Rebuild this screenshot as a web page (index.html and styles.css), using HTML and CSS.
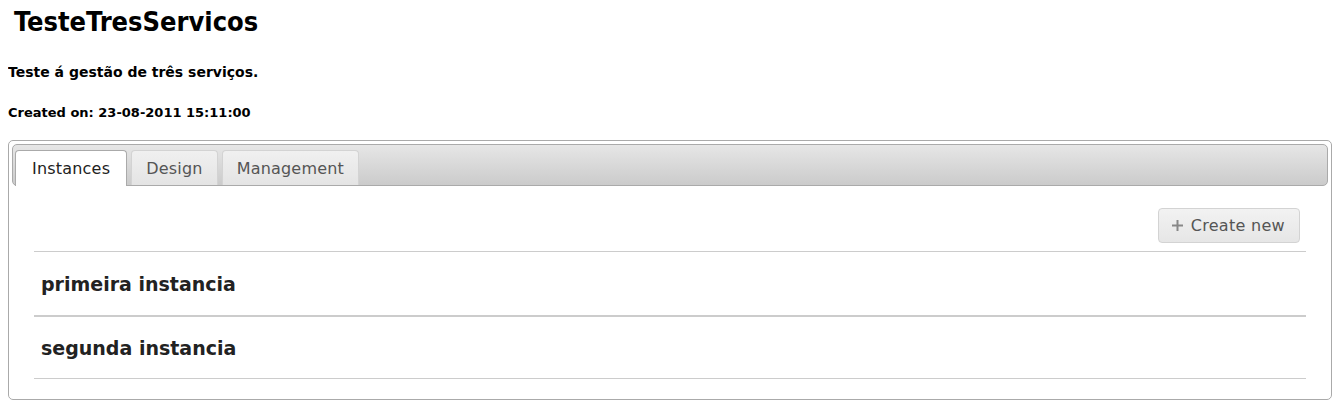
FILE: index.html
```html
<!DOCTYPE html>
<html>
<head>
<meta charset="utf-8">
<link rel="stylesheet" href="styles.css">
</head>
<body>
<h1 class="title">TesteTresServicos</h1>
<p class="desc">Teste á gestão de três serviços.</p>
<p class="created">Created on: 23-08-2011 15:11:00</p>
<div class="tabs">
  <ul class="tab-nav">
    <li class="tab active">Instances</li>
    <li class="tab">Design</li>
    <li class="tab">Management</li>
  </ul>
  <div class="panel">
    <div class="toolbar">
      <button class="btn"><svg class="plus" width="11" height="11" viewBox="0 0 11 11"><path d="M4.5 0h2v4.5H11v2H6.5V11h-2V6.5H0v-2h4.5z" fill="#888"/></svg>Create new</button>
    </div>
    <ul class="list">
      <li class="item first">primeira instancia</li>
      <li class="item second">segunda instancia</li>
    </ul>
  </div>
</div>
</body>
</html>
```
FILE: styles.css
```css
body {
  margin: 8px;
  background: #fff;
  color: #000;
  font-family: "DejaVu Sans", Verdana, sans-serif;
}
.title {
  margin: 0;
  padding-left: 6px;
  font-family: "DejaVu Sans Condensed", "DejaVu Sans", sans-serif;
  font-weight: bold;
  font-size: 27px;
  line-height: 27px;
}
.desc {
  margin: 29px 0 0;
  font-family: "DejaVu Sans", sans-serif;
  font-weight: bold;
  font-size: 14px;
  line-height: 16px;
}
.created {
  margin: 25px 0 0;
  font-family: "DejaVu Sans", sans-serif;
  font-weight: bold;
  font-size: 13px;
  line-height: 15px;
}
.tabs {
  margin-top: 20px;
  border: 1px solid #aaa;
  border-radius: 5px;
  padding: 3px;
  height: 252px;
}
.tab-nav {
  list-style: none;
  margin: 0;
  padding: 5px 2px 0;
  height: 35px;
  display: flex;
  gap: 4px;
  align-items: flex-end;
  border: 1px solid #aaa;
  border-radius: 5px;
  background: linear-gradient(#e6e6e6, #cbcbcb);
}
.tab {
  height: 34px;
  padding: 0 14px;
  display: flex;
  align-items: center;
  font-size: 16px;
  letter-spacing: 0.2px;
  color: #555;
  background: linear-gradient(#f0f0f0, #e4e4e4);
  border: 1px solid #d3d3d3;
  border-bottom: 0;
  border-radius: 4px 4px 0 0;
}
.tab.active {
  color: #222;
  background: #fff;
  border-color: #aaa;
  height: 35px;
  margin-bottom: -1px;
  padding: 0 16px;
}
.panel {
  padding: 22px 22px 0;
}
.toolbar {
  display: flex;
  justify-content: flex-end;
  padding-right: 6px;
}
.btn {
  height: 35px;
  padding: 0 14px 0 13px;
  display: flex;
  align-items: center;
  gap: 8px;
  font-family: "DejaVu Sans", Verdana, sans-serif;
  font-size: 16px;
  letter-spacing: 0.3px;
  color: #555;
  background: linear-gradient(#f2f2f2, #e6e6e6);
  border: 1px solid #d3d3d3;
  border-radius: 4px;
}
.list {
  list-style: none;
  margin: 8px 0 0;
  padding: 0;
  border-top: 1px solid #ccc;
}
.item {
  padding-left: 7px;
  display: flex;
  align-items: center;
  font-weight: bold;
  font-size: 19px;
  color: #222;
  border-bottom: 1px solid #ccc;
}
.item.first {
  height: 63px;
  border-bottom-width: 2px;
}
.item.second {
  height: 61px;
}
```
